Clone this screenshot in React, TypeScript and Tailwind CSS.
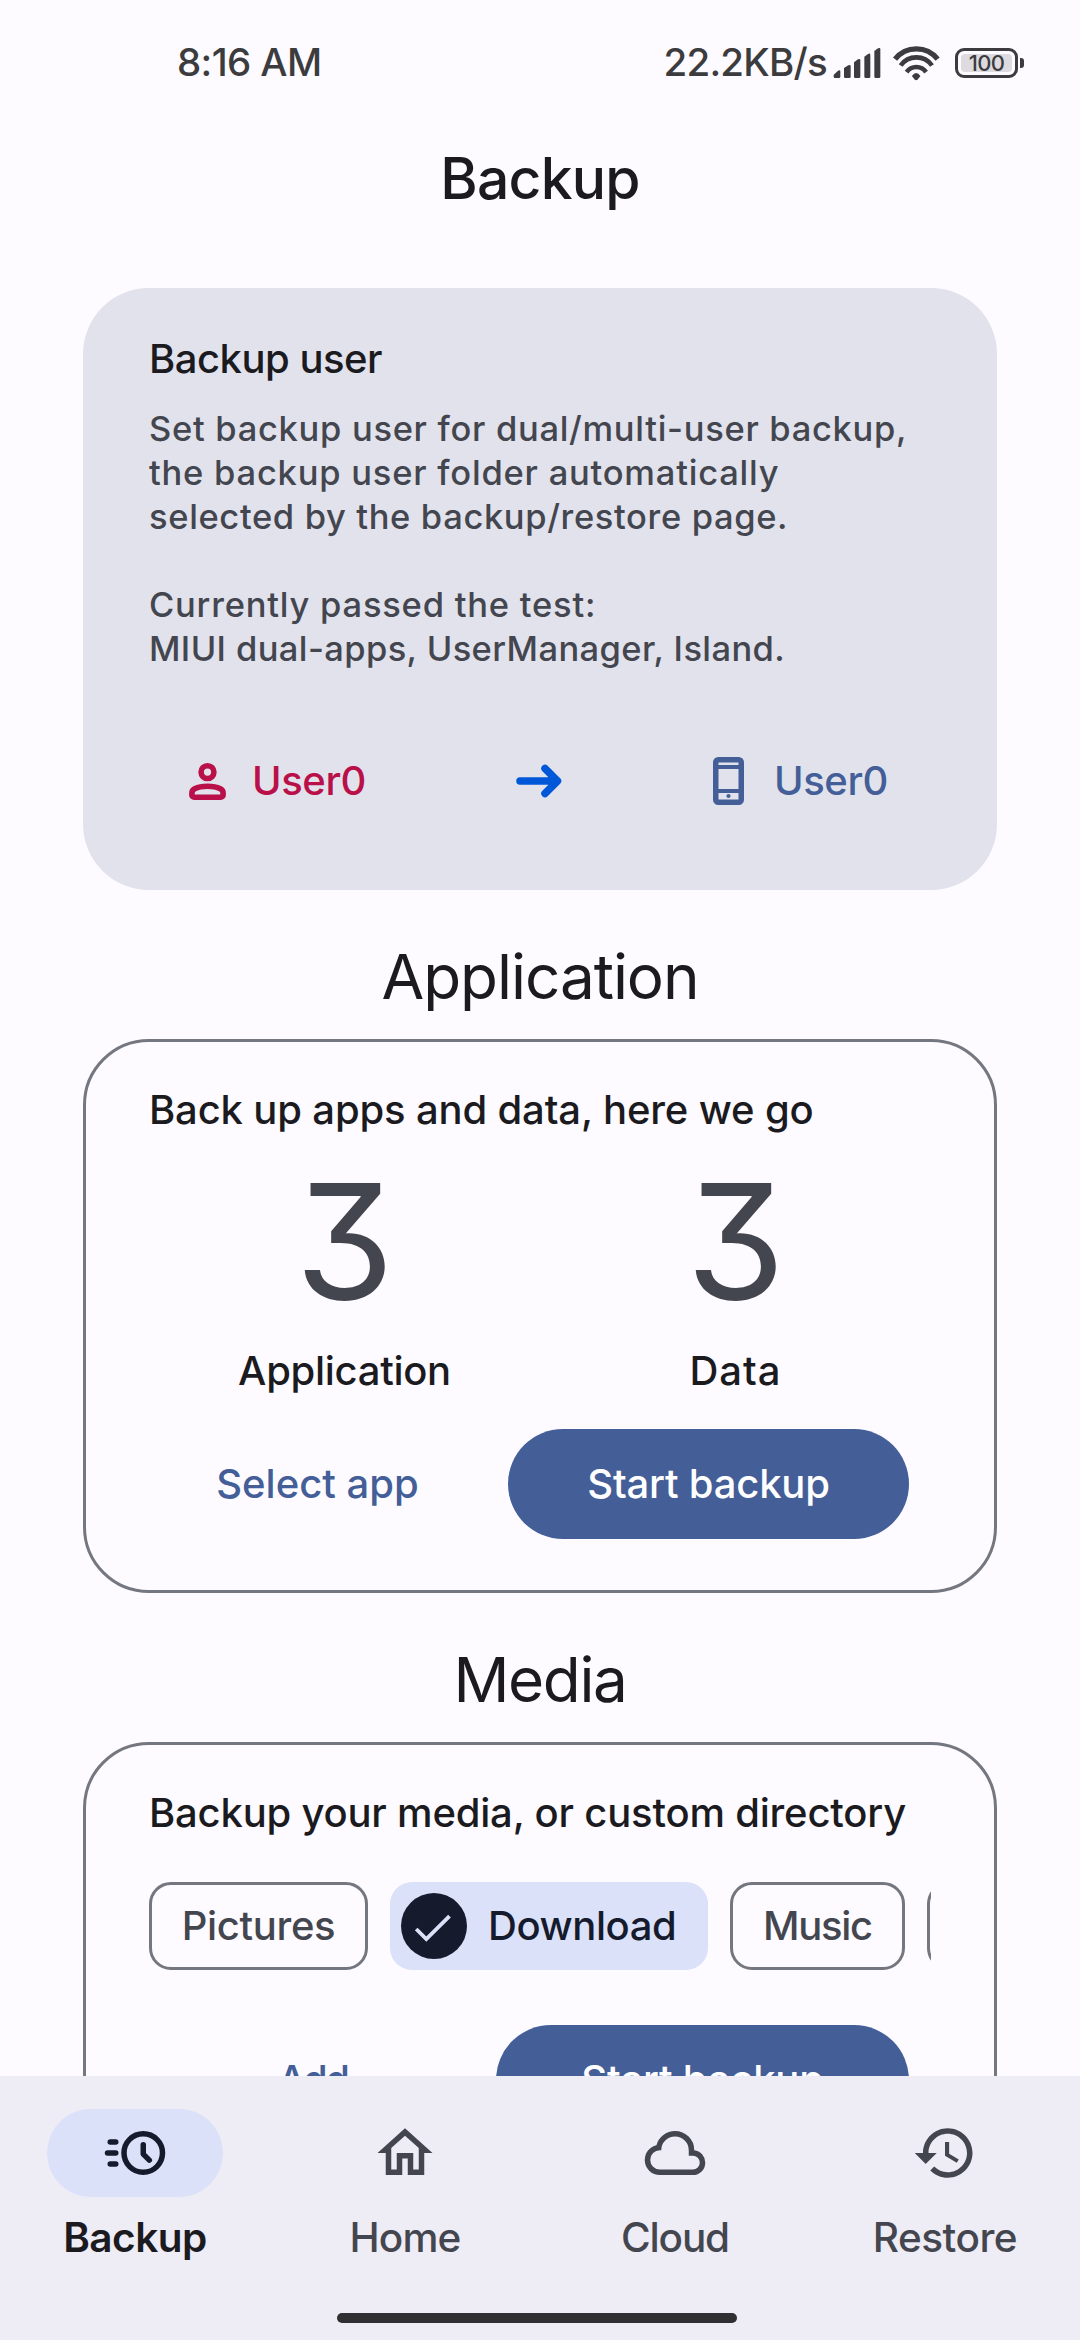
import React from "react";

type IconProps = { className?: string };

function SignalIcon() {
  return (
    <svg className="h-[30px] w-[48px]" viewBox="0 0 144 90" fill="currentColor">
      <path d="M2 82 Q2 79 5 78 L15 68 Q22 65 22 70 V86 Q22 90 18 90 H6 Q2 90 2 86Z" />
      <path d="M33 60 L46 52 Q53 49 53 55 V86 Q53 90 49 90 H37 Q33 90 33 86Z" />
      <path d="M63 43 L75 34 Q82 31 82 37 V86 Q82 90 78 90 H67 Q63 90 63 86Z" />
      <path d="M94 26 L105 18 Q112 14 112 21 V86 Q112 90 108 90 H98 Q94 90 94 86Z" />
      <path d="M124 9 L135 1 Q142 -2 142 4 V86 Q142 90 138 90 H128 Q124 90 124 86Z" />
    </svg>
  );
}

function WifiIcon() {
  return (
    <svg className="h-[35px] w-[47px]" viewBox="760 44 142 106" fill="none" stroke="currentColor">
      <path d="M766 84A82 82 0 0 1 895 84" strokeWidth="16" />
      <path d="M783 103A58 58 0 0 1 878 103" strokeWidth="14" />
      <path d="M801 123A36 36 0 0 1 860 123" strokeWidth="14" />
      <path d="M817 135Q830 116 843 135L834 146Q830 149 826 146Z" fill="currentColor" stroke="none" />
    </svg>
  );
}

function PersonIcon({ className }: IconProps) {
  return (
    <svg className={className} viewBox="0 0 24 24" fill="none" stroke="currentColor" strokeWidth="2.450">
      <circle cx="12" cy="7.900" r="2.800" />
      <path d="M5.200 17c0-.8.450-1.400 1.200-1.800C8 14.400 10 14.100 12 14.100s4 .3 5.600 1.100c.75.4 1.200 1 1.200 1.800v.9c0 .55-.45 1-1 1H6.200c-.55 0-1-.45-1-1z" />
    </svg>
  );
}

function ArrowIcon({ className }: IconProps) {
  return (
    <svg className={className} viewBox="0 0 66 66" fill="none" stroke="currentColor" strokeWidth="7.5" strokeLinecap="round" strokeLinejoin="round">
      <path d="M14 33H51M39 20.500L51.500 33L39 45.500" />
    </svg>
  );
}

function PhoneIcon({ className }: IconProps) {
  return (
    <svg className={className} viewBox="0 0 31 48" fill="none" stroke="currentColor">
      <rect x="2.750" y="2.750" width="25.500" height="42.500" rx="2.500" strokeWidth="5.500" />
      <path d="M3 10H28M3 34H28" strokeWidth="4" />
      <circle cx="15.500" cy="39" r="2.100" fill="currentColor" stroke="none" />
    </svg>
  );
}

function CheckIcon({ className }: IconProps) {
  return (
    <svg className={className} viewBox="0 0 66 66" fill="none" stroke="currentColor" strokeWidth="3.800">
      <path d="M15.200 36L25.300 46.100L48.500 23.200" />
    </svg>
  );
}

function AcuteIcon({ className }: IconProps) {
  return (
    <svg className={className} viewBox="0 0 24 24" fill="none" stroke="currentColor" strokeWidth="2" strokeLinecap="round" strokeLinejoin="round">
      <circle cx="15" cy="12" r="7" />
      <path d="M15 9v3.400l2.200 2.200M3 8h2M2 12h3M3 16h2" />
    </svg>
  );
}

function HomeIcon({ className }: IconProps) {
  return (
    <svg className={className} viewBox="0 0 24 24" fill="currentColor">
      <path d="M12 5.690l5 4.500V18h-2v-6H9v6H7v-7.810l5-4.500M12 3L2 12h3v8h6v-6h2v6h6v-8h3L12 3z" />
    </svg>
  );
}

function CloudIcon({ className }: IconProps) {
  return (
    <svg className={className} viewBox="0 0 24 24" fill="currentColor">
      <path d="M6.500 20q-2.275 0-3.888-1.575Q1 16.850 1 14.575q0-1.950 1.175-3.475Q3.350 9.575 5.250 9.150q.625-2.300 2.500-3.725Q9.625 4 12 4q2.925 0 4.963 2.037Q19 8.075 19 11q1.725.2 2.863 1.488Q23 13.775 23 15.500q0 1.875-1.312 3.188Q20.375 20 18.500 20zm0-2h12q1.050 0 1.775-.725Q21 16.550 21 15.500t-.725-1.775Q19.550 13 18.500 13H17v-2q0-2.075-1.462-3.538Q14.075 6 12 6T8.463 7.462Q7 8.925 7 11h-.5q-1.450 0-2.475 1.025Q3 13.050 3 14.500t1.025 2.475Q5.050 18 6.500 18z" />
    </svg>
  );
}

function HistoryIcon({ className }: IconProps) {
  return (
    <svg className={className} viewBox="0 0 24 24" fill="currentColor">
      <path d="M13 3c-4.970 0-9 4.030-9 9H1l3.890 3.890.07.14L9 12H6c0-3.870 3.130-7 7-7s7 3.130 7 7-3.130 7-7 7c-1.930 0-3.680-.79-4.940-2.060l-1.420 1.420C8.270 19.990 10.510 21 13 21c4.970 0 9-4.030 9-9s-4.030-9-9-9zm-1 5v5l4.280 2.540.72-1.210-3.500-2.080V8H12z" />
    </svg>
  );
}

function StatusBar() {
  return (
    <header className="flex h-[124px] shrink-0 items-center justify-between pt-[2px] pr-[56px] pl-[177px] text-[38.5px] text-[#3c3c3e]">
      <span className="tracking-[-0.62px]">8:16 AM</span>
      <div className="flex items-center">
        <span className="mr-[6px] tracking-[-0.76px]">22.2KB/s</span>
        <SignalIcon />
        <span className="ml-[12px]">
          <WifiIcon />
        </span>
        <div className="ml-[15px] flex h-[30px] w-[63px] rounded-[9px] border-[3px] border-current p-[3px]">
          <div className="flex flex-1 items-center justify-center rounded-[4px] bg-[#dddbe0] text-[22px] leading-none tracking-[-0.6px]">
            100
          </div>
        </div>
        <span className="ml-[2px] h-[10px] w-[4px] rounded-r-[3px] bg-current" />
      </div>
    </header>
  );
}

function SectionHeading({ children, className }: { children: React.ReactNode; className: string }) {
  return (
    <h2 className={`flex h-[149px] items-center justify-center pt-[24px] text-[62px] leading-none font-normal ${className}`}>
      {children}
    </h2>
  );
}

function OutlinedCard({ children }: { children: React.ReactNode }) {
  return (
    <section className="mx-[83px] rounded-[66px] border-[3px] border-[#757780] px-[63px] pt-[35px]">{children}</section>
  );
}

function Stat({ value, label, tracking }: { value: string; label: string; tracking: string }) {
  return (
    <div className="flex flex-1 flex-col items-center">
      <span className="h-[196px] text-[160px] leading-[196px] font-normal text-[#44464f] [font-feature-settings:'cv09']">
        {value}
      </span>
      <span className={`h-[63px] leading-[63px] ${tracking}`}>{label}</span>
    </div>
  );
}

function NavItem({
  icon,
  label,
  active,
  tracking,
}: {
  icon: React.ReactNode;
  label: string;
  active?: boolean;
  tracking: string;
}) {
  return (
    <a className={`flex flex-1 flex-col items-center ${active ? "text-[#151b2c]" : "text-[#44464f]"}`}>
      <span className={`flex h-[88px] w-[176px] items-center justify-center rounded-full ${active ? "bg-[#dbe1f9]" : ""}`}>
        {icon}
      </span>
      <span className={`h-[80px] text-[40.5px] leading-[82px] ${active ? "font-semibold text-[#1b1b1f]" : ""} ${tracking}`}>
        {label}
      </span>
    </a>
  );
}

export default function App() {
  return (
    <div className="flex h-[2340px] w-[1080px] flex-col overflow-hidden bg-[#fdfbff] font-['Inter',sans-serif] text-[40px] font-medium text-[#1b1b1f]">
      <StatusBar />
      <h1 className="h-[108px] shrink-0 text-center text-[57px] leading-[110px] tracking-[-0.77px]">Backup</h1>

      <main className="min-h-0 flex-1 overflow-hidden pt-[56px]">
        <section className="mx-[83px] h-[602px] rounded-[66px] bg-[#e1e2ec] px-[66px] pt-[38px]">
          <h3 className="h-[66px] leading-[66px] tracking-[-0.5px]">Backup user</h3>
          <div className="mt-[15px] text-[34.5px] leading-[44px] whitespace-nowrap text-[#44464f]">
            <p className="tracking-[0.7px]">Set backup user for dual/multi-user backup,</p>
            <p className="tracking-[0.78px]">the backup user folder automatically</p>
            <p className="tracking-[0.64px]">selected by the backup/restore page.</p>
            <p className="mt-[44px] tracking-[0.78px]">Currently passed the test:</p>
            <p className="tracking-[0.39px]">MIUI dual-apps, UserManager, Island.</p>
          </div>
          <div className="mt-[77px] flex h-[66px] items-center tracking-[-0.4px]">
            <div className="flex w-[357px] items-center gap-[17px] pl-[31px] text-[#ba1049]">
              <PersonIcon className="size-[55px]" />
              <span>User0</span>
            </div>
            <ArrowIcon className="size-[66px] text-[#0058d8]" />
            <div className="flex flex-1 items-center gap-[30px] pl-[141px] text-[#445e98]">
              <PhoneIcon className="h-[48px] w-[31px]" />
              <span>User0</span>
            </div>
          </div>
        </section>

        <SectionHeading className="tracking-[-1.05px]">Application</SectionHeading>
        <OutlinedCard>
          <h3 className="h-[66px] leading-[66px] tracking-[-0.15px]">Back up apps and data, here we go</h3>
          <div className="flex">
            <Stat value="3" label="Application" tracking="tracking-[-0.3px]" />
            <Stat value="3" label="Data" tracking="tracking-[1px]" />
          </div>
          <div className="mx-[22px] mt-[27px] mb-[51px] flex h-[110px] gap-[44px]">
            <button className="flex-1 text-[#445e98]">Select app</button>
            <button className="w-[401px] rounded-full bg-[#445e98] tracking-[-0.2px] text-white">Start backup</button>
          </div>
        </OutlinedCard>

        <SectionHeading className="tracking-[-1.4px]">Media</SectionHeading>
        <OutlinedCard>
          <h3 className="h-[66px] leading-[66px] tracking-[-0.2px] whitespace-nowrap">
            Backup your media, or custom directory
          </h3>
          <div className="mt-[36px] flex h-[88px] gap-[22px] overflow-hidden text-[#44464f]">
            <span className="flex w-[219px] shrink-0 items-center justify-center rounded-[22px] border-[3px] border-[#757780] tracking-[-0.32px]">
              Pictures
            </span>
            <span className="flex w-[318px] shrink-0 items-center rounded-[22px] bg-[#dbe1f9] pl-[11px] text-[#151b2c]">
              <span className="mr-[21px] rounded-full bg-[#151b2c] text-[#dbe1f9]">
                <CheckIcon className="size-[66px]" />
              </span>
              <span className="tracking-[-0.42px]">Download</span>
            </span>
            <span className="flex w-[175px] shrink-0 items-center justify-center rounded-[22px] border-[3px] border-[#757780] tracking-[-1.3px]">
              Music
            </span>
            <span className="w-[219px] shrink-0 rounded-[22px] border-[3px] border-[#757780]" />
          </div>
          <div className="mx-[22px] mt-[55px] mb-[51px] flex h-[110px] gap-[38px]">
            <button className="flex-1 pr-[4px] tracking-[-2.6px] text-[#445e98]">Add</button>
            <button className="w-[413px] rounded-full bg-[#445e98] tracking-[-0.2px] text-white">Start backup</button>
          </div>
        </OutlinedCard>
      </main>

      <nav className="flex h-[264px] shrink-0 flex-col items-center bg-[#eeecf5] pt-[33px]">
        <div className="flex w-full">
          <NavItem active icon={<AcuteIcon className="size-[66px]" />} label="Backup" tracking="tracking-[-0.5px]" />
          <NavItem icon={<HomeIcon className="size-[66px]" />} label="Home" tracking="tracking-[-0.86px]" />
          <NavItem icon={<CloudIcon className="size-[66px]" />} label="Cloud" tracking="tracking-[-1.18px]" />
          <NavItem icon={<HistoryIcon className="size-[66px]" />} label="Restore" tracking="tracking-[-0.51px]" />
        </div>
        <span className="mt-[36px] mr-[6px] h-[10px] w-[400px] rounded-full bg-[#303032]" />
      </nav>
    </div>
  );
}
